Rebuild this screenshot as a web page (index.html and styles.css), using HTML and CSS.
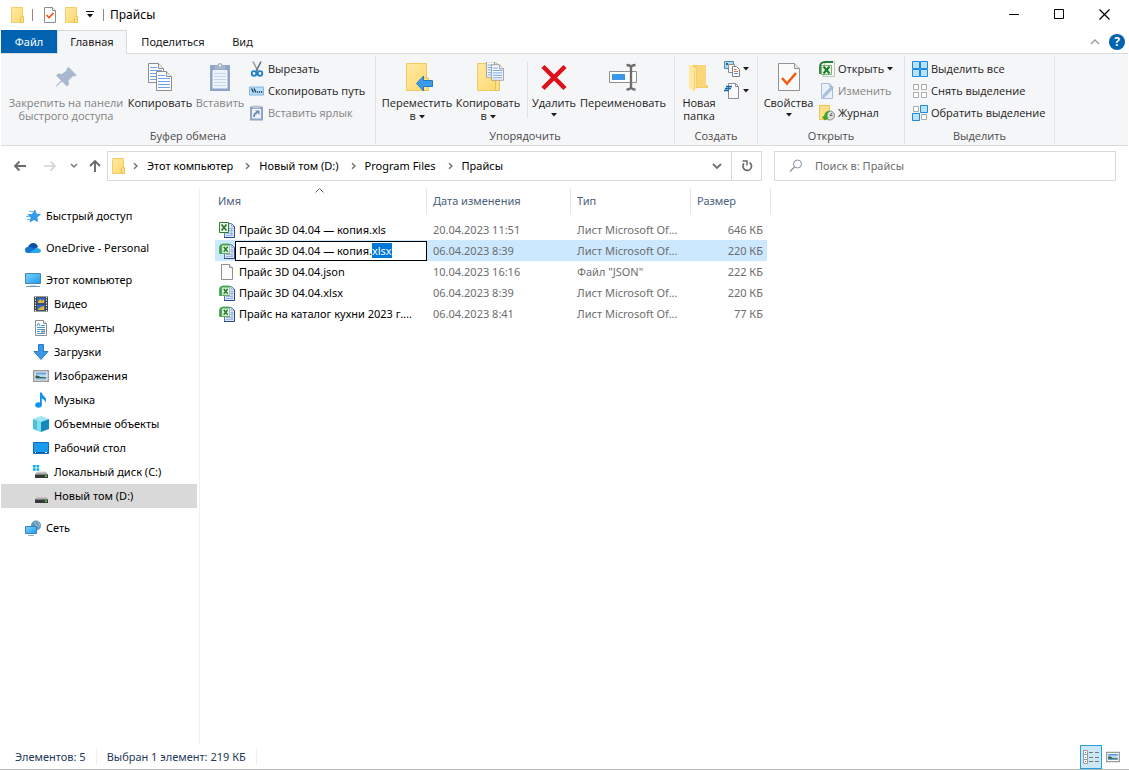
FILE: index.html
```html
<!DOCTYPE html>
<html lang="ru">
<head>
<meta charset="utf-8">
<title>Прайсы</title>
<link rel="stylesheet" href="styles.css">
</head>
<body>
<svg class="sprites" width="0" height="0" aria-hidden="true">
  <defs>
    <linearGradient id="gFolder" x1="0" y1="0" x2="1" y2="1"><stop offset="0" stop-color="#ffe9a2"/><stop offset="1" stop-color="#ffd970"/></linearGradient>
    <linearGradient id="gScreen" x1="0" y1="0" x2="1" y2="1"><stop offset="0" stop-color="#7fd3ff"/><stop offset="1" stop-color="#1b98f0"/></linearGradient>
    <linearGradient id="gSky" x1="0" y1="0" x2="0" y2="1"><stop offset="0" stop-color="#3f86d8"/><stop offset=".5" stop-color="#d5ebf8"/><stop offset=".7" stop-color="#8fb9cf"/><stop offset="1" stop-color="#5e93b5"/></linearGradient>
    <linearGradient id="gDisk" x1="0" y1="0" x2="0" y2="1"><stop offset="0" stop-color="#d8d8d8"/><stop offset="1" stop-color="#9a9a9a"/></linearGradient>
  </defs>
  <symbol id="folder" viewBox="0 0 16 16"><path d="M1.500.5h11v15h-11z" fill="url(#gFolder)" stroke="#efcf68"/><path d="M10.500 15.500v-5l1-1h2v6z" fill="#ffe08a" stroke="#e8c253"/></symbol>
  <symbol id="sheet" viewBox="0 0 16 16"><path d="M2.500.5h8l3 3v12h-11z" fill="#fafafa" stroke="#8f8f8f"/><path d="M10.500.5v3h3" fill="#fff" stroke="#8f8f8f"/></symbol>
  <symbol id="excel" viewBox="0 0 16 16"><path d="M5.500 1.500h7l3 3v11h-10z" fill="#dce6f8" stroke="#5b75b8"/><path d="M12.500 1.500v3h3M10 6.500h4M10 8.500h4M7 11.500h7M7 13.500h7M12.500 6v7" fill="none" stroke="#9db2e0"/><path d="M5 15.500h10.500V4.500" fill="none" stroke="#2c4a86"/><path d="M.5.500h9v10h-9z" fill="#f2faef" stroke="#2f7d2f"/><path d="M2.500 2.500l5 6M7.500 2.500l-5 6" stroke="#2b7d2b" stroke-width="1.800"/></symbol>
  <symbol id="excelx" viewBox="0 0 16 16"><path d="M5.500 1.500h7l3 3v11h-10z" fill="#dce6f8" stroke="#5b75b8"/><path d="M12.500 1.500v3h3M11.500 6.500h3M11.500 8.500h3M7 11.500h7M7 13.500h7M13 6v7" fill="none" stroke="#9db2e0"/><path d="M5 15.500h10.500V4.500" fill="none" stroke="#2c4a86"/><path d="M.5 10V4.500Q.5 1 4 1h6.500v9.500H.5z" fill="#3fa04c" stroke="#4fae58"/><path d="M3 2.500h7.500v7.500H3z" fill="#f2faef" stroke="#8fc492" stroke-width=".6"/><path d="M4.700 3.800l4 5M8.700 3.800l-4 5" stroke="#287a31" stroke-width="1.600"/></symbol>
  <symbol id="picture" viewBox="0 0 16 16"><path d="M.75 2.750h14.500v10.500H.75z" fill="#fff" stroke="#9b9b9b" stroke-width="1.500"/><path d="M2.500 4.500h11v7h-11z" fill="url(#gSky)"/><path d="M2.500 7.500q3-.5 5 1.500l6 .5v.5h-11z" fill="#2e5f4d"/></symbol>
  <symbol id="disk" viewBox="0 0 16 16"><path d="M4 7.500h9l2 3H2z" fill="url(#gDisk)"/><path d="M2 10.500h13v3.500H2z" fill="#383838"/><path d="M12 11.500h2v1.500h-2z" fill="#3fe04a"/></symbol>
  <symbol id="down" viewBox="0 0 6 4"><path d="M0 0h6L3 3.500z" fill="currentColor"/></symbol>
  <symbol id="chevron" viewBox="0 0 6 8"><path d="M1 1.200l3 2.800-3 2.800" fill="none" stroke="#707070" stroke-width="1.400"/></symbol>
  <symbol id="page32" viewBox="0 0 24 30"><path d="M1.500 1.500h16l5 5v22h-21z" fill="#fafafa" stroke="#929292"/><path d="M17.500 1.500v5h5" fill="#e9e9e9" stroke="#929292"/></symbol>
  <symbol id="textpage" viewBox="0 0 16 20"><path d="M.5.500h10l5 5v14H.5z" fill="#fdfdfd" stroke="#8d8d8d"/><path d="M10.500.5v5h5" fill="#eee" stroke="#8d8d8d"/><path d="M2 4.500h7M2 7.500h12M2 10.500h12M2 13.500h12M2 16.500h12" stroke="#6fa1e8" stroke-width="1.200"/></symbol>
</svg>

<div class="window">
  <header class="titlebar">
    <svg class="i16" aria-hidden="true"><use href="#folder"/></svg>
    <span class="bar"></span>
    <button class="quick" aria-label="Свойства"><svg class="i16" viewBox="0 0 16 16"><path d="M2.500.5h8l3 3v12h-11z" fill="#fafafa" stroke="#8f8f8f"/><path d="M10.500.5v3h3" fill="#fff" stroke="#8f8f8f"/><path d="M4.500 8l2.500 2.500 4.500-4.500" fill="none" stroke="#f0540c" stroke-width="1.600"/></svg></button>
    <button class="quick" aria-label="Новая папка"><svg class="i16"><use href="#folder"/></svg></button>
    <button class="quick more" aria-label="Настройка панели"><svg width="8" height="7" viewBox="0 0 8 7"><path d="M0 .5h8" stroke="#111"/><path d="M1 3h6L4 6.500z" fill="#111"/></svg></button>
    <span class="bar"></span>
    <h1 class="title">Прайсы</h1>
    <div class="winbtns">
      <button aria-label="Свернуть"><svg width="11" height="11" viewBox="0 0 11 11"><path d="M0 5.500h10" stroke="#000"/></svg></button>
      <button aria-label="Развернуть"><svg width="11" height="11" viewBox="0 0 11 11"><path d="M.5.500h9v9h-9z" fill="none" stroke="#000"/></svg></button>
      <button aria-label="Закрыть"><svg width="11" height="11" viewBox="0 0 11 11"><path d="M.5.500l10 10M10.500.5l-10 10" stroke="#000" stroke-width="1.200"/></svg></button>
    </div>
  </header>

  <nav class="tabs">
    <button class="tab file">Файл</button>
    <button class="tab active">Главная</button>
    <button class="tab share">Поделиться</button>
    <button class="tab view">Вид</button>
    <div class="tabtools">
      <button aria-label="Свернуть ленту"><svg width="10" height="6" viewBox="0 0 10 6"><path d="M1 5l4-4 4 4" fill="none" stroke="#9a9a9a" stroke-width="1.300"/></svg></button>
      <button class="help" aria-label="Справка">?</button>
    </div>
  </nav>

  <section class="ribbon">
    <div class="group clipboard">
      <div class="tools">
        <button class="big pin" disabled><svg class="i32" viewBox="0 0 32 32"><path d="M18.500 5l8 8-1.500 1.500-2-.5-4.500 4.500.5 4-2 2-5-5-6 5.500-.5-.5 5.500-6-5-5 2-2 4 .5L16.500 8.500 16.500 7z" fill="#a9b8cf"/></svg><span>Закрепить на панели быстрого доступа</span></button>
        <button class="big copy"><svg class="i32" viewBox="0 0 32 32"><use href="#textpage" x="4" y="1" width="16" height="20"/><use href="#textpage" x="12" y="9" width="16" height="20"/></svg><span>Копировать</span></button>
        <button class="big paste" disabled><svg class="i32" viewBox="0 0 32 32"><rect x="6" y="3" width="20" height="26" rx="1" fill="#8ea3c6"/><path d="M8.500 8h15v18.500h-15z" fill="#edf3fb"/><path d="M10 11.500h12M10 14.500h12M10 17.500h12M10 20.500h12M10 23.500h12" stroke="#c7d5e9"/><path d="M10.500 7.500v-4h3a2.500 2.500 0 0 1 5 0h3v4z" fill="#a9b6ca"/><circle cx="16" cy="3.500" r="1" fill="#fff"/></svg><span>Вставить</span></button>
        <div class="smalls">
          <button class="small"><svg class="i16" viewBox="0 0 16 16"><path d="M4 .5l5 10" stroke="#999" stroke-width="1.500"/><path d="M12 .5l-5 10" stroke="#626c78" stroke-width="1.500"/><g fill="none" stroke="#1f82c8" stroke-width="1.800"><ellipse cx="5" cy="12.500" rx="2.300" ry="2.300"/><ellipse cx="11" cy="12.500" rx="2.300" ry="2.300"/></g></svg>Вырезать</button>
          <button class="small"><svg class="i16" viewBox="0 0 16 16"><path d="M.5 4h14v8H.5z" fill="#b9e0fa" stroke="#85b4d8"/><path d="M2.500 5.500l2 4M5 5.500l2 4" stroke="#143659" stroke-width="1.300"/><path d="M8 9h1.200M10 9h1.200M12 9h1.200" stroke="#143659" stroke-width="1.400"/></svg>Скопировать путь</button>
          <button class="small" disabled><svg class="i16" viewBox="0 0 16 16"><path d="M1 1.500h13v14H1z" fill="#8ea3c6"/><path d="M3 4h9v9.500H3z" fill="#edf3fb"/><path d="M4 .5h7v3H4z" fill="#b7c4d9"/><path d="M5 12q0-4 3-4" fill="none" stroke="#7087b0" stroke-width="1.800"/><path d="M6 5.500h4.500V10z" fill="#7087b0"/></svg>Вставить ярлык</button>
        </div>
      </div>
      <h2>Буфер обмена</h2>
    </div>

    <div class="group organize">
      <div class="tools">
        <button class="big move"><svg class="i32" viewBox="0 0 32 32"><path d="M5.500 1.500h20v27h-20z" fill="url(#gFolder)" stroke="#edcb62"/><path d="M22.500 28.500V17.500l1-1.500h4v12.500z" fill="#ffe08a" stroke="#e8c253"/><path d="M15.500 21.500l7-7.500v4.500h9v6h-9v4.500z" fill="#3e9be8" stroke="#2479c4"/></svg><span>Переместить в <svg class="arr"><use href="#down"/></svg></span></button>
        <button class="big copyto"><svg class="i32" viewBox="0 0 32 32"><path d="M5.500 1.500h20v27h-20z" fill="url(#gFolder)" stroke="#edcb62"/><path d="M23.500 28.500V18.500l1-1h3v11z" fill="#ffe08a" stroke="#e8c253"/><use href="#textpage" x="14" y="-1" width="13" height="17"/><use href="#textpage" x="19" y="2" width="13" height="17"/></svg><span>Копировать в <svg class="arr"><use href="#down"/></svg></span></button>
        <span class="divider"></span>
        <button class="big delete"><svg class="i32" viewBox="0 0 32 32"><path d="M5 4.500L27 26.500M27 4.500L5 26.500" stroke="#df1118" stroke-width="4.500"/></svg><span>Удалить</span><svg class="arr"><use href="#down"/></svg></button>
        <button class="big rename"><svg class="i32" viewBox="0 0 32 32"><path d="M2.500 9.500h27v11h-27z" fill="#fff" stroke="#8e8e8e"/><path d="M5 12h13v6H5z" fill="#3b98e8"/><path d="M19.500 3q4.500 0 4.500 3 0-3 4.500-3M24 5v21M19.500 27.500q4.500 0 4.500-3 0 3 4.500 3" fill="none" stroke="#6d6d6d" stroke-width="2.300"/></svg><span>Переименовать</span></button>
      </div>
      <h2>Упорядочить</h2>
    </div>

    <div class="group create">
      <div class="tools">
        <button class="big newfolder"><svg class="i32" viewBox="0 0 32 32"><path d="M9 3h14v20h2v3H13z" fill="#f3cd6c"/><path d="M14 3h9v22h-9z" fill="#f9d679"/><path d="M6 3h2l5 4v18l-1.500 4.500L6 26z" fill="#ffe79d"/><path d="M11.500 8v20" stroke="#f2d176"/></svg><span>Новая папка</span></button>
        <div class="smalls">
          <button class="small" aria-label="Создать элемент"><svg class="i16" viewBox="0 0 16 16"><path d="M.5.500h9v7h-9z" fill="#a9dcf5" stroke="#4c88ad"/><path d="M2 2h2v2H2z" fill="#25658f"/><path d="M4.500 3.500h6v8h-6z" fill="#fff" stroke="#8c8c8c"/><path d="M8.500 5.500h4l3 3v7h-7z" fill="#fff" stroke="#7d7d7d"/><path d="M10 8.500h2.500M10 10.500h4" stroke="#e3755b"/><path d="M10 12.500h4" stroke="#4b91df"/></svg><svg class="arr"><use href="#down"/></svg></button>
          <button class="small" aria-label="Простой доступ"><svg class="i16" viewBox="0 0 16 16"><path d="M4.500.5h7l3 3v12h-10z" fill="#fafafa" stroke="#8c8c8c"/><path d="M11.500.5v3h3" fill="none" stroke="#8c8c8c"/><path d="M2 3.500h6M1 5.500h6M0 7.500h5" stroke="#0f63b5" stroke-width="1.300"/></svg><svg class="arr"><use href="#down"/></svg></button>
        </div>
      </div>
      <h2>Создать</h2>
    </div>

    <div class="group open">
      <div class="tools">
        <button class="big props"><svg class="i32" viewBox="0 0 32 32"><use href="#page32" x="4" y="0" width="24" height="30"/><path d="M9 16l5 5.500 9-10.500" fill="none" stroke="#f25d12" stroke-width="2.600"/></svg><span>Свойства</span><svg class="arr"><use href="#down"/></svg></button>
        <div class="smalls">
          <button class="small"><svg class="i16" viewBox="0 0 16 16"><path d="M6 .5h9.500v15H4z" fill="#f3f8f3" stroke="#b9c9b9"/><path d="M1 13V6q0-5 5-5h8" fill="none" stroke="#2b7d35" stroke-width="1.800"/><path d="M2.500 4.500h10v9h-10z" fill="#e9f6e9" stroke="#79b07c"/><path d="M4.500 5.500l6 7M10.500 5.500l-6 7" stroke="#207a2b" stroke-width="2"/></svg>Открыть<svg class="arr"><use href="#down"/></svg></button>
          <button class="small" disabled><svg class="i16" viewBox="0 0 16 16"><path d="M2.500.5h8l3 3v12h-11z" fill="#eaf0f8" stroke="#a9bddb"/><path d="M10.500.5v3h3" fill="none" stroke="#a9bddb"/><path d="M14.500 4.500L6 13.500l-2 1 .5-2.500L12.500 3.500" fill="#afc2e0" stroke="#9cb1d4"/></svg>Изменить</button>
          <button class="small"><svg class="i16" viewBox="0 0 16 16"><path d="M.5.500h10v14H.5z" fill="#ffe08a" stroke="#e9c552"/><circle cx="11" cy="10.500" r="4.500" fill="#ddd" stroke="#8b8b8b"/><path d="M11 10.500l2-2.500M11 10.500h2.500" stroke="#666"/><path d="M3 12l3 3.500L9.500 13l-1-1q-1-3 2.500-6-5-.5-6 5z" fill="#40a52b"/></svg>Журнал</button>
        </div>
      </div>
      <h2>Открыть</h2>
    </div>

    <div class="group select">
      <div class="tools">
        <div class="smalls">
          <button class="small"><svg class="i16" viewBox="0 0 16 16"><path d="M.5.500h7v7h-7zM8.500.5h7v7h-7zM.5 8.500h7v7h-7zM8.500 8.500h7v7h-7z" fill="#b9e3fb" stroke="#1e88dc"/></svg>Выделить все</button>
          <button class="small"><svg class="i16" viewBox="0 0 16 16"><path d="M1.500 1.500h5v5h-5zM9.500 1.500h5v5h-5zM1.500 9.500h5v5h-5zM9.500 9.500h5v5h-5z" fill="#fff" stroke="#a9a9a9"/></svg>Снять выделение</button>
          <button class="small"><svg class="i16" viewBox="0 0 16 16"><path d="M1.500 1.500h5v5h-5zM9.500 9.500h5v5h-5z" fill="#fff" stroke="#a9a9a9"/><path d="M8.500.5h7v7h-7zM.5 8.500h7v7h-7z" fill="#b9e3fb" stroke="#1e88dc"/></svg>Обратить выделение</button>
        </div>
      </div>
      <h2>Выделить</h2>
    </div>
  </section>

  <nav class="navbar">
    <button class="nav" aria-label="Назад"><svg width="14" height="12" viewBox="0 0 14 12"><path d="M13 6H2M6.500 1.500L2 6l4.500 4.500" fill="none" stroke="#6b6b6b" stroke-width="1.800"/></svg></button>
    <button class="nav" aria-label="Вперед" disabled><svg width="14" height="12" viewBox="0 0 14 12"><path d="M1 6h11M7.500 1.500L12 6l-4.500 4.500" fill="none" stroke="#d2d2d2" stroke-width="1.600"/></svg></button>
    <button class="nav recent" aria-label="Последние"><svg width="8" height="6" viewBox="0 0 8 6"><path d="M1 1l3 3 3-3" fill="none" stroke="#777" stroke-width="1.500"/></svg></button>
    <button class="nav up" aria-label="Вверх"><svg width="14" height="14" viewBox="0 0 14 14"><path d="M7 13V2M2 7l5-5 5 5" fill="none" stroke="#6b6b6b" stroke-width="1.900"/></svg></button>
    <div class="address">
      <svg class="i16" aria-hidden="true"><use href="#folder"/></svg>
      <svg class="chev"><use href="#chevron"/></svg><a href="#pc">Этот компьютер</a>
      <svg class="chev"><use href="#chevron"/></svg><a href="#d">Новый том (D:)</a>
      <svg class="chev"><use href="#chevron"/></svg><a href="#pf">Program Files</a>
      <svg class="chev"><use href="#chevron"/></svg><a href="#prices">Прайсы</a>
      <button class="drop" aria-label="Предыдущие расположения"><svg width="10" height="7" viewBox="0 0 10 7"><path d="M1 1l4 4 4-4" fill="none" stroke="#707070" stroke-width="1.900"/></svg></button>
      <button class="refresh" aria-label="Обновить"><svg width="12" height="12" viewBox="0 0 12 12"><path d="M8.500 2.500A4.300 4.300 0 1 1 3 3.300" fill="none" stroke="#6b6b6b" stroke-width="1.700"/><path d="M1.500 1h4.500v4.500" fill="none" stroke="#6b6b6b" stroke-width="1.500"/></svg></button>
    </div>
    <label class="search"><svg width="14" height="14" viewBox="0 0 14 14" aria-hidden="true"><circle cx="8.500" cy="5" r="4" fill="none" stroke="#8e8e9c"/><path d="M5.500 8L1 12.500" stroke="#8e8e9c" stroke-width="1.200"/></svg><input type="search" placeholder="Поиск в: Прайсы" aria-label="Поиск"></label>
  </nav>

  <main class="main">
    <aside class="sidebar">
      <ul class="tree">
        <li class="top"><a href="#quick"><svg class="i16" viewBox="0 0 16 16"><path d="M10 2l1 4 4.500.5-3.500 2.500.5 4.500L9 11.500l-4 2.500 1-4.500L3 6.500h4z" fill="#2f9cf0" stroke="#1c80cf" stroke-width=".6"/><path d="M4 3.500h4M1 8.500h4M2 11.500h3" stroke="#68b8ee"/></svg>Быстрый доступ</a></li>
        <li class="top"><a href="#onedrive"><svg class="i16" viewBox="0 0 16 16"><path d="M3 7q2-4.500 6-4 3 .5 4 4l-6 4z" fill="#0d4fa6"/><path d="M3 13a3 3 0 0 1 0-6q3-1 5.500 1l5 5z" fill="#1473cf"/><path d="M4 13l7-5q4-.5 5 2.500.2 2.500-3 2.500z" fill="#28a8ea"/></svg>OneDrive - Personal</a></li>
        <li class="top"><a href="#pc"><svg class="i16" viewBox="0 0 16 16"><path d="M.5 1.500h15v10H.5z" fill="url(#gScreen)" stroke="#4b87ab"/><path d="M5 13.500h6" stroke="#b9d7e8"/><path d="M1 14.500h14" stroke="#6a9cba"/></svg>Этот компьютер</a>
          <ul>
            <li><a href="#video"><svg class="i16" viewBox="0 0 16 16"><path d="M1 .5h14v15H1z" fill="#3b3b3b"/><path d="M2.500 1v14M13.500 1v14" stroke="#fff" stroke-width="1.200" stroke-dasharray="1.200 1.400"/><path d="M4 1.500h8v6H4zM4 8.500h8v6H4z" fill="#3069c4"/><path d="M5 6l2-3 2 2 2-2v4H5zM5 13l3-2 3-1v4H5z" fill="#e5b62f"/></svg>Видео</a></li>
            <li><a href="#docs"><svg class="i16" viewBox="0 0 16 16"><path d="M2.500.5h8l3 3v12h-11z" fill="#fff" stroke="#8f8f8f"/><path d="M10.500.5v3h3" fill="#eee" stroke="#8f8f8f"/><path d="M4 6l1.500-3L7 6M8 5.500h4M4 7.500h8M4 9.500h8M4 11.500h3M4 13.500h8" fill="none" stroke="#4e97d1"/><path d="M8 10.500h4v2H8z" fill="#6f8ea4"/></svg>Документы</a></li>
            <li><a href="#downloads"><svg class="i16" viewBox="0 0 16 16"><path d="M5.500.5h5v7h4.500L8 15.500 1 7.500h4.500z" fill="#3a97e8" stroke="#277cc9"/></svg>Загрузки</a></li>
            <li><a href="#images"><svg class="i16"><use href="#picture"/></svg>Изображения</a></li>
            <li><a href="#music"><svg class="i16" viewBox="0 0 16 16"><ellipse cx="5.500" cy="13" rx="3.300" ry="2.700" fill="#1193ef"/><path d="M7 .5h1.800q.5 3 3 4.500 2.500 2.500.2 6 .5-3.500-3.200-4.500V13H7z" fill="#1193ef"/></svg>Музыка</a></li>
            <li><a href="#objects"><svg class="i16" viewBox="0 0 16 16"><path d="M0 3l8-3 8 3-8 3z" fill="#9de6f2"/><path d="M0 3l8 3v10l-8-3z" fill="#48c1dc"/><path d="M16 3L8 6v10l8-3z" fill="#1489bd"/><path d="M4 4.500l4 1.500v9.500l-4-1.500z" fill="#7fe0ec"/></svg>Объемные объекты</a></li>
            <li><a href="#desktop"><svg class="i16" viewBox="0 0 16 16"><path d="M.5 2.500h15v11H.5z" fill="#1a9bf2" stroke="#0b6fbd"/><path d="M1 12.500h14" stroke="#0c5d9e"/><path d="M2 12.500h1M12 12.500h2" stroke="#fff"/></svg>Рабочий стол</a></li>
            <li><a href="#c"><svg class="i16" viewBox="0 0 16 16"><use href="#disk"/><path d="M0 1h2.700v2.500H0zM3.500 1h2.700v2.500H3.500zM0 4.300h2.700v2.500H0zM3.500 4.300h2.700v2.500H3.500z" fill="#08b0f0"/></svg>Локальный диск (C:)</a></li>
            <li class="current"><a href="#d"><svg class="i16"><use href="#disk" y="1"/></svg>Новый том (D:)</a></li>
          </ul>
        </li>
        <li class="top"><a href="#network"><svg class="i16" viewBox="0 0 16 16"><circle cx="11" cy="5.500" r="5" fill="#5f93b8"/><path d="M8 2q3 0 3 3l3 2M12 1q2 2 3 5" fill="none" stroke="#93bbd4" stroke-width="1.200"/><path d="M.5 6.500h11v7H.5z" fill="url(#gScreen)" stroke="#3a82b3"/><path d="M3 15.500h6" stroke="#8fb2c8"/></svg>Сеть</a></li>
      </ul>
    </aside>
    <section class="files">
      <svg class="sort" width="9" height="5" viewBox="0 0 9 5" aria-hidden="true"><path d="M.5 4.500l4-4 4 4" fill="none" stroke="#6b6b6b"/></svg>
      <table>
        <colgroup><col class="cname"><col class="cdate"><col class="ctype"><col class="csize"><col class="cend"></colgroup>
        <thead><tr><th>Имя</th><th>Дата изменения</th><th>Тип</th><th colspan="2">Размер</th></tr></thead>
        <tbody>
          <tr><td><span class="name"><svg class="i16"><use href="#excel"/></svg><span>Прайс 3D 04.04 — копия.xls</span></span></td><td>20.04.2023 11:51</td><td>Лист Microsoft Of...</td><td class="num">646 КБ</td></tr>
          <tr class="selected"><td><span class="name"><svg class="i16"><use href="#excelx"/></svg><input id="rename" type="text" value="Прайс 3D 04.04 — копия.xlsx" aria-label="Имя файла" autofocus></span></td><td>06.04.2023 8:39</td><td>Лист Microsoft Of...</td><td class="num">220 КБ</td></tr>
          <tr><td><span class="name"><svg class="i16"><use href="#sheet"/></svg><span>Прайс 3D 04.04.json</span></span></td><td>10.04.2023 16:16</td><td>Файл "JSON"</td><td class="num">222 КБ</td></tr>
          <tr><td><span class="name"><svg class="i16"><use href="#excelx"/></svg><span>Прайс 3D 04.04.xlsx</span></span></td><td>06.04.2023 8:39</td><td>Лист Microsoft Of...</td><td class="num">220 КБ</td></tr>
          <tr><td><span class="name"><svg class="i16"><use href="#excelx"/></svg><span>Прайс на каталог кухни 2023 г....</span></span></td><td>06.04.2023 8:41</td><td>Лист Microsoft Of...</td><td class="num">77 КБ</td></tr>
        </tbody>
      </table>
    </section>
  </main>

  <footer class="status">
    <span>Элементов: 5</span><span>Выбран 1 элемент: 219 КБ</span>
    <div class="views">
      <button class="on" aria-label="Таблица"><svg width="18" height="16" viewBox="0 0 18 16"><path d="M1.500 1.500h4v13h-4zM1.500 5.500h4M1.500 10.500h4" fill="#fff" stroke="#999"/><path d="M7 3.500h4M13 3.500h4M7 8.500h4M13 8.500h4M7 12.500h4M13 12.500h4" stroke="#777"/><path d="M3 3h1v1H3z" fill="#387"/><path d="M3 8h1v1H3z" fill="#39f"/><path d="M3 12h1v1H3z" fill="#d31"/></svg></button>
      <button aria-label="Эскизы"><svg width="14" height="14" viewBox="0 0 16 16"><use href="#picture"/></svg></button>
    </div>
  </footer>
</div>
<script src="app.js"></script>
</body>
</html>
```
FILE: styles.css
```css
* { box-sizing: border-box; }
body {
  margin: 0;
  font: 11px/16px "Noto Sans", "Open Sans", sans-serif;
  color: #1b1b1b;
  background: #fff;
}
button, input { font: inherit; color: inherit; }
button { border: 0; background: none; padding: 0; display: flex; align-items: center; justify-content: center; white-space: nowrap; }
a { color: inherit; text-decoration: none; }
ul { list-style: none; margin: 0; padding: 0; }
h1, h2 { margin: 0; font: inherit; }
svg { display: block; flex: none; }
.sprites { position: absolute; }
.i16 { width: 16px; height: 16px; }
.i32 { width: 32px; height: 32px; }
.arr { width: 6px; height: 4px; }

.window { min-height: 100vh; display: flex; flex-direction: column; border-bottom: 1px solid #b5b5b5; padding: 0 1px; }

.titlebar { height: 29px; display: flex; align-items: center; padding-left: 9px; }
.bar { width: 1px; height: 12px; background: #8a8a8a; margin: 0 6px; }
.quick { width: 22px; }
.quick.more { width: 14px; }
.title { color: #000; font-size: 12px; }
.winbtns { margin-left: auto; display: flex; padding-right: 1px; }
.winbtns button { width: 45px; height: 29px; }

.tabs { height: 24px; display: flex; position: relative; z-index: 1; padding-top: 1px; }
.tab { height: 24px; }
.tab.file { width: 56px; color: #fff; background: #0063b1; height: 23px; }
.tab.active { width: 70px; background: #f5f6f7; border: 1px solid #dadbdc; border-bottom: 0; padding-bottom: 1px; }
.tab.share { width: 92px; }
.tab.view { width: 47px; }
.tabtools { margin-left: auto; display: flex; align-items: center; gap: 9px; padding-right: 3px; }
.tabtools .help { width: 16px; height: 16px; border-radius: 50%; background: #0063b1; color: #fff; font-weight: 700; font-size: 12px; }

.ribbon { display: flex; background: #f5f6f7; border-top: 1px solid #dadbdc; border-bottom: 1px solid #dadbdc; padding: 2px 0 1px; font-family: "Open Sans", "Noto Sans", sans-serif; }
.group { display: flex; flex-direction: column; justify-content: space-between; height: 88px; border-right: 1px solid #e2e3e4; }
.group h2 { text-align: center; color: #4b4b4b; line-height: 16px; }
.tools { display: flex; height: 72px; padding-left: 4px; }
.big { flex-direction: column; justify-content: flex-start; padding-top: 6px; line-height: 13px; white-space: normal; }
.big span { margin-top: 2px; }
.big span .arr { display: inline-block; vertical-align: middle; }
.big > .arr { margin-top: 4px; }
button:disabled { color: #838383; }
.smalls { display: flex; flex-direction: column; padding-top: 2px; }
.small { height: 22px; justify-content: flex-start; gap: 3px; }
.clipboard { width: 375px; }
.clipboard .tools { padding-left: 6px; }
.pin { width: 118px; }
.copy { width: 70px; }
.paste { width: 50px; margin-right: 4px; }
.organize { width: 299px; }
.move { width: 74px; }
.copyto { width: 68px; }
.divider { width: 1px; height: 56px; margin: 6px 4px 0 5px; background: #e2e3e4; }
.delete { width: 44px; }
.rename { width: 94px; }
.create { width: 83px; }
.newfolder { width: 40px; margin-right: 5px; }
.open { width: 147px; }
.props { width: 53px; margin-right: 4px; }
.select { width: 150px; }
.select .tools { padding-left: 7px; }

.navbar { display: flex; align-items: center; height: 40px; padding: 0 12px 0 4px; }
.nav { width: 30px; height: 24px; }
.nav.recent { width: 17px; }
.nav.up { width: 25px; }
.address { flex: 1; height: 30px; border: 1px solid #d9d9d9; display: flex; align-items: center; color: #000; padding-left: 3px; }
.address .chev { width: 6px; height: 8px; margin: 0 8px 0 6px; }
.address a { margin-right: 6px; white-space: nowrap; }
.drop { margin-left: auto; width: 29px; height: 28px; }
.refresh { width: 30px; height: 28px; border-left: 1px solid #d9d9d9; }
.search { flex: 0 1 342px; height: 30px; border: 1px solid #d9d9d9; margin-left: 12px; display: flex; align-items: center; gap: 12px; padding-left: 14px; }
.search input { flex: 1; min-width: 0; border: 0; padding: 0; outline: 0; background: none; }
.search input::placeholder { color: #6d6d6d; opacity: 1; }

.main { flex: 1; display: flex; padding-top: 2px; }
.sidebar { width: 199px; border-right: 1px solid #f0f0f0; padding: 16px 2px 0 0; color: #000; }
.tree > .top + .top { margin-top: 8px; }
.tree a { display: flex; align-items: center; gap: 5px; height: 24px; padding-left: 24px; white-space: nowrap; }
.tree ul a { padding-left: 32px; }
.current { background: #d9d9d9; }

.files { flex: 1; position: relative; padding-left: 15px; }
.sort { position: absolute; left: 115px; top: 0; }
table { width: 556px; table-layout: fixed; border-collapse: separate; border-spacing: 0; color: #6d6d6d; }
.cname { width: 212px; }
.cdate { width: 144px; }
.ctype { width: 120px; }
.csize { width: 76px; }
.cend { width: 4px; }
th { height: 26px; padding: 0 6px; text-align: left; font-weight: 400; color: #4c607a; border-right: 1px solid #e5e5e5; }
th:first-child { padding-left: 3px; }
tbody::before { content: ""; display: block; height: 5px; }
td { height: 21px; padding: 0 6px; white-space: nowrap; }
td:first-child { padding: 0 0 0 4px; }
td.num { text-align: right; padding-right: 4px; }
.name { display: flex; align-items: center; gap: 4px; color: #000; }
.selected td { background: #cce8ff; }
.name input { flex: 1; min-width: 0; height: 20px; margin-left: -4px; border: 1px solid #000; padding: 0 3px; outline: 0; background: #fff; border-radius: 0; }
.name input::selection { background: #0078d7; color: #fff; }

.status { height: 24px; display: flex; align-items: center; color: #1e395b; padding-left: 14px; }
.status > span { padding-right: 10px; margin-right: 10px; border-right: 1px solid #f0f0f0; }
.views { margin-left: auto; display: flex; align-self: stretch; padding-right: 4px; }
.views button { width: 22px; }
.views .on { background: #cce8f6; border: 1px solid #26a0da; }
```
FILE: app.js
```js
const field = document.getElementById('rename');
field.focus();
field.setSelectionRange(field.value.lastIndexOf('.') + 1, field.value.length);
```
